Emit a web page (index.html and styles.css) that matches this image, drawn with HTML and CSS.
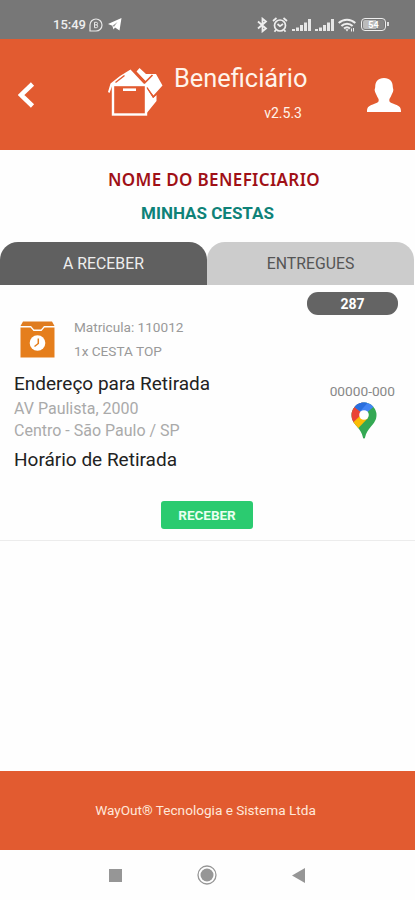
FILE: index.html
```html
<!DOCTYPE html>
<html lang="pt-BR">
<head>
  <meta charset="UTF-8">
  <title>Beneficiário</title>
  <link rel="stylesheet" href="styles.css">
</head>
<body>

  <div class="status-bar">
    <div class="status-left">
      <span class="clock">15:49</span>
      <svg class="chat-icon" width="14" height="14" viewBox="0 0 14 14" fill="none" stroke="#e8e8e8">
        <path d="M1 13V7a6 6 0 1 1 6 6z" stroke-width="1.2"/>
        <path d="M5.5 4.3v5.4h1.8a1.4 1.4 0 0 0 0-2.8 1.3 1.3 0 0 0 0-2.6zM5.5 6.9h2"/>
      </svg>
      <svg class="send-icon" width="14" height="13" viewBox="0 0 14 13">
        <path d="M0 6 13.5 0 11.5 12.5 7 9.5 5.5 11.5 4.3 7.8z" fill="#fff"/>
        <path d="M4.5 7.8 9.5 4 6 8.8" fill="#999"/>
      </svg>
    </div>
    <div class="status-right">
      <svg width="11" height="16" viewBox="0 0 11 16" fill="none" stroke="#eee" stroke-width="1.8">
        <path d="M1 4.5 9 11.5 5.5 14.3V1.7L9 4.5 1 11.5"/>
      </svg>
      <svg width="16" height="16" viewBox="0 0 16 16" fill="none" stroke="#eee" stroke-width="1.7">
        <circle cx="8" cy="8.5" r="5.5"/>
        <path d="M1 4 4.5 1M15 4l-3.5-3M3.8 13 2.5 14.8M12.2 13l1.3 1.8M5.5 7 8 9.2 11 7"/>
      </svg>
      <svg width="19" height="12" viewBox="0 0 19 12" fill="#e6e6e6">
        <path d="M0 10h3v2H0zM4 8.500h3V12H4zM8 6h3v6H8zM12 3.500h3V12H12zM16 0h3v12H16z"/>
      </svg>
      <svg width="19" height="12" viewBox="0 0 19 12" fill="#e6e6e6">
        <path d="M0 10h3v2H0zM4 8.500h3V12H4zM8 6h3v6H8zM12 3.500h3V12H12zM16 0h3v12H16z"/>
      </svg>
      <svg width="18" height="14" viewBox="0 0 18 14" fill="none" stroke="#eee" stroke-width="2">
        <path d="M.7 5a12 12 0 0 1 16.6 0M3.4 8a8 8 0 0 1 11.2 0M6 10.6a4.5 4.5 0 0 1 6 0"/>
        <path d="M7.4 11.3h3.2L9 13.5z" fill="#eee" stroke="none"/>
        <path d="M13.500 10.500v3M15.500 10v3.500" stroke-width="1"/>
      </svg>
      <div class="battery"><span>54</span></div>
    </div>
  </div>

  <header class="header">
    <svg class="back" width="17" height="26" viewBox="0 0 17 26">
      <path d="M14.5 2 3 13l11.5 11" fill="none" stroke="#fff" stroke-width="4.6"/>
    </svg>
    <svg class="box-logo" width="56" height="50" viewBox="0 0 56 50">
      <path d="M1 25 3.500 16.500 13 9 23.500 2.500 37 17 5.500 18 2.500 26z" fill="#fff"/>
      <path d="M8.500 15.500 17.500 8.500" stroke="#e25b30" stroke-width="1.5"/>
      <path d="M29.500 4.500 32.500 1 39 7H49L55.500 18.500 46.500 28.500 38.500 18.500 38 14z" fill="#fff"/>
      <path d="M27.500 4 38.500 15 45.500 8" fill="none" stroke="#e25b30" stroke-width="1.7"/>
      <path d="M39 20 46 31 49.500 28V34L39 47z" fill="#fff"/>
      <rect x="6" y="18" width="33" height="29.5" fill="#e25b30" stroke="#fff" stroke-width="2.4"/>
      <path d="M16 22.700H29" stroke="#fff" stroke-width="2.6"/>
      <path d="M40 20.500 46.300 30 49.500 27" fill="none" stroke="#e25b30" stroke-width="1.3"/>
    </svg>
    <div class="brand">
      <h1>Beneficiário</h1>
      <p>v2.5.3</p>
    </div>
    <svg class="user" width="36" height="36" viewBox="0 0 36 36" fill="#fff">
      <path d="M18 1c6 0 8.800 3.500 8.800 9 0 1.500 1 2.300.3 4.300-.5 2.200-1.200 2.600-1.800 4.200-.6 1.700-1.800 2.700-2 4.200-.3 2.200 1.200 2.900 4.200 4 4.700 1.800 7.800 2.500 7.500 8.300H1c-.3-5.800 2.800-6.500 7.500-8.300 3-1.100 4.500-1.800 4.200-4-.2-1.500-1.400-2.500-2-4.200-.6-1.600-1.300-2-1.800-4.200-.7-2 .3-2.800.3-4.300C9.200 4.500 12 1 18 1z"/>
    </svg>
  </header>

  <main class="content">
    <h2 class="name">NOME DO BENEFICIARIO</h2>
    <h3 class="subtitle">MINHAS CESTAS</h3>

    <div class="tabs">
      <div class="tab active">A RECEBER</div>
      <div class="tab">ENTREGUES</div>
    </div>

    <div class="card">
      <div class="badge">287</div>
      <div class="order">
        <svg width="35" height="37" viewBox="0 0 35 37">
          <path d="M3 .5H32L34.500 5H24L21 8.500H14L11 5H.5z" fill="#df7c20"/>
          <path d="M.5 6.500H10.500L13.500 10H21.500L24.500 6.500H34.500V36.500H.5z" fill="#e57e1c"/>
          <circle cx="17.500" cy="22" r="7.800" fill="#fff"/>
          <path d="M18.300 17.500V22.500L14.500 25.500" fill="none" stroke="#e57e1c" stroke-width="1.500"/>
        </svg>
        <div class="order-text">
          <p>Matricula: 110012</p>
          <p>1x CESTA TOP</p>
        </div>
      </div>
      <div class="pickup">
        <div class="address">
          <h4>Endereço para Retirada</h4>
          <p>AV Paulista, 2000</p>
          <p>Centro - São Paulo / SP</p>
          <h4 class="hours-title">Horário de Retirada</h4>
        </div>
        <div class="location">
          <p>00000-000</p>
          <svg width="26" height="37" viewBox="0 0 26 37">
            <defs>
              <clipPath id="pin"><path d="M13 .5A12.500 12.500 0 0 0 .5 13c0 5 2.500 8 5.500 11.500 3.200 3.700 5 6.500 5.800 10.500.5 2 1.900 2 2.400 0 .8-4 2.600-6.800 5.800-10.500C23 21 25.500 18 25.500 13A12.500 12.500 0 0 0 13 .5z"/></clipPath>
            </defs>
            <g clip-path="url(#pin)">
              <path d="M0 0h26v37H0z" fill="#34a853"/>
              <path d="M0 0H12L13 13 2.500 22-2 20z" fill="#ea4335"/>
              <path d="M1.500 21 10 13 17 16 5.500 28z" fill="#fbbc04"/>
              <path d="M3.500 5 10 10 13 13 23.500 4 20-2H3z" fill="#4285f4"/>
              <path d="M3.500 5 9 9.500 16.500 1V-1H3z" fill="#2a6fde"/>
            </g>
            <circle cx="13" cy="13" r="4.800" fill="#fff"/>
          </svg>
        </div>
      </div>
      <button class="receive-btn">RECEBER</button>
    </div>
  </main>

  <footer class="footer">WayOut® Tecnologia e Sistema Ltda</footer>

  <nav class="nav-bar">
    <svg width="13" height="13" viewBox="0 0 13 13"><path d="M0 0h13v13H0z" fill="#969696"/></svg>
    <svg width="20" height="20" viewBox="0 0 20 20">
      <circle cx="10" cy="10" r="9" fill="none" stroke="#969696" stroke-width="1.300"/>
      <circle cx="10" cy="10" r="6.500" fill="#969696"/>
    </svg>
    <svg width="13" height="15" viewBox="0 0 13 15"><path d="M13 0v15L0 7.500z" fill="#969696"/></svg>
  </nav>

</body>
</html>
```
FILE: styles.css
```css
* {
  box-sizing: border-box;
}
body {
  margin: 0;
  height: 900px;
  display: flex;
  flex-direction: column;
  overflow: hidden;
  background: #fefefe;
  font-family: Roboto, "Liberation Sans", sans-serif;
}
h1, h2, h3, h4, p {
  margin: 0;
  font-weight: 400;
  white-space: nowrap;
}
svg {
  display: block;
  flex: none;
}
.status-bar {
  height: 39px;
  padding: 10px 27px 0 53px;
  display: flex;
  justify-content: space-between;
  align-items: center;
  background: #777;
  color: #eee;
}
.status-left, .status-right {
  display: flex;
  align-items: center;
}
.status-right {
  gap: 4px;
}
.clock {
  font-size: 13px;
  font-weight: 500;
}
.chat-icon {
  margin-left: 3px;
}
.send-icon {
  margin-left: 5px;
}
.battery {
  position: relative;
  width: 25px;
  height: 13px;
  margin: 0 2px 0 1px;
  border: 1.5px solid #eee;
  border-radius: 4px;
  padding: 1px;
}
.battery span {
  display: block;
  height: 9px;
  border-radius: 2px;
  background: linear-gradient(to right, #bbb 60%, #888 60%);
  color: #fff;
  font-size: 9px;
  font-weight: 700;
  line-height: 10px;
  text-align: center;
}
.battery::after {
  content: "";
  position: absolute;
  top: 3px;
  right: -4px;
  width: 2px;
  height: 4px;
  background: #ddd;
}
.header {
  height: 111px;
  padding: 0 13px 0 18px;
  display: flex;
  align-items: flex-start;
  background: #e25b30;
  color: #fff4ea;
}
.back {
  margin-top: 43px;
}
.box-logo {
  margin: 28px 0 0 72px;
}
.brand {
  width: 134px;
  margin: 24px 0 0 11px;
}
.brand h1 {
  font-size: 25.4px;
  line-height: 31px;
}
.brand p {
  margin-top: 10px;
  padding-right: 6px;
  font-size: 14px;
  line-height: 18px;
  text-align: right;
}
.user {
  margin: 38px 0 0 auto;
}
.content {
  flex: 1;
  display: flex;
  flex-direction: column;
}
.name {
  margin-top: 17px;
  padding-left: 13px;
  font-family: "Noto Sans", sans-serif;
  font-size: 17px;
  font-weight: 600;
  letter-spacing: 0.35px;
  line-height: 25px;
  text-align: center;
  color: #a01016;
}
.subtitle {
  margin-top: 11px;
  font-size: 17px;
  font-weight: 700;
  line-height: 20px;
  text-align: center;
  color: #0e8278;
}
.tabs {
  margin-top: 19px;
  display: flex;
}
.tab {
  width: 207px;
  height: 43px;
  border-radius: 18px 18px 0 0;
  background: #ccc;
  color: #555;
  font-size: 15.8px;
  line-height: 43px;
  text-align: center;
}
.tab.active {
  background: #606060;
  color: #eee;
}
.card {
  height: 256px;
  padding: 7px 17px 0 14px;
  display: flex;
  flex-direction: column;
  border-bottom: 1px solid #ececec;
}
.badge {
  align-self: flex-end;
  width: 91px;
  height: 23px;
  border-radius: 11px;
  background: #646464;
  color: #fff;
  font-size: 14px;
  font-weight: 700;
  line-height: 24px;
  text-align: center;
}
.order {
  display: flex;
  padding-left: 6px;
}
.order svg {
  margin-top: 6px;
}
.order-text {
  margin-left: 19px;
  color: #999;
  font-size: 13.6px;
  line-height: 24px;
}
.pickup {
  display: flex;
  justify-content: space-between;
  margin-top: 8px;
}
.address h4 {
  font-size: 19px;
  line-height: 26px;
  color: #222;
}
.address p {
  font-size: 16px;
  line-height: 22px;
  color: #aaa;
}
.address h4 + p {
  margin-top: 1px;
}
.address .hours-title {
  margin-top: 5px;
}
.location {
  display: flex;
  flex-direction: column;
  align-items: center;
  margin: 11px 3px 0 0;
  font-size: 13.7px;
  font-weight: 300;
  line-height: 18px;
  color: #888;
}
.location svg {
  margin: 2px 0 0 3px;
}
.receive-btn {
  align-self: center;
  width: 92px;
  height: 28px;
  margin: 28px 0 0 2px;
  padding: 0;
  border: none;
  border-radius: 3px;
  background: #2bcb70;
  color: #e9fff0;
  font-family: inherit;
  font-size: 13.5px;
  font-weight: 700;
}
.footer {
  height: 79px;
  background: #e25b30;
  color: #ffe8da;
  font-size: 13.6px;
  line-height: 79px;
  padding-right: 4px;
  text-align: center;
}
.nav-bar {
  height: 50px;
  padding: 0 110px 0 109px;
  display: flex;
  justify-content: space-between;
  align-items: center;
}
```
